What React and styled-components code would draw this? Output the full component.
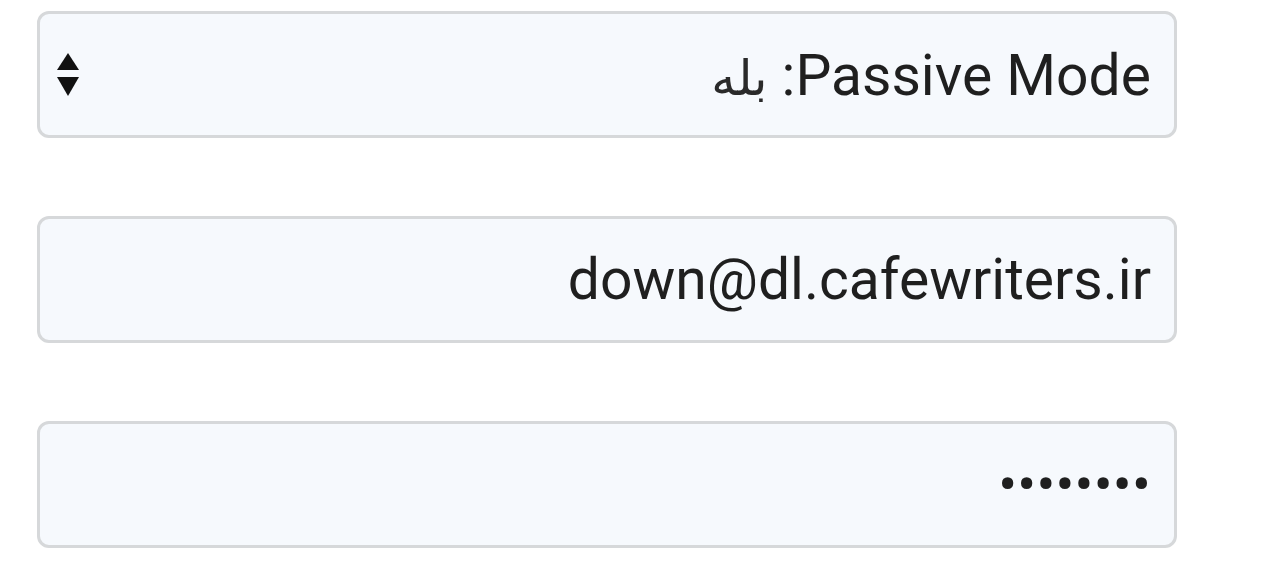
import React from "react";
import styled, { createGlobalStyle } from "styled-components";

const Global = createGlobalStyle`
  html, body { margin: 0; padding: 0; background: #ffffff; }
  body { font-family: Roboto, "DejaVu Sans", sans-serif; }
`;

const Form = styled.div`
  display: flex;
  flex-direction: column;
  gap: 78px;
  width: 1140px;
  padding: 11px 0 0 37px;
  direction: rtl;
`;

const fieldBase = `
  box-sizing: border-box;
  width: 100%;
  height: 127px;
  border: 3px solid #d6d8da;
  border-radius: 12px;
  background: #f6f9fd;
  color: #1f1f1f;
  font-family: Roboto, "DejaVu Sans", sans-serif;
  font-size: 57px;
  padding: 0 23px 0 24px;
`;

const SelectBox = styled.div`
  ${fieldBase}
  display: flex;
  align-items: center;
  justify-content: space-between;
`;

const SelectLabel = styled.span`
  line-height: 1;
  padding-top: 2px;
`;

const Persian = styled.span`
  font-family: "DejaVu Sans", sans-serif;
  font-size: 49px;
  font-weight: 400;
  color: #2a2a2a;
`;

const Spinner = styled.svg`
  width: 22px;
  height: 44px;
  margin-left: -7px;
  flex: none;
`;

const TextInput = styled.input`
  ${fieldBase}
  display: block;
  outline: none;
  text-align: right;
`;

const PasswordInput = styled(TextInput)`
  font-size: 56px;
  letter-spacing: 0.2px;
  padding-right: 23px;
`;

export default function App() {
  return (
    <>
      <Global />
      <Form>
        <SelectBox>
          <SelectLabel>
            Passive Mode: <Persian>بله</Persian>
          </SelectLabel>
          <Spinner viewBox="0 0 22 44">
            <path d="M11 0 L22 17 L0 17 Z" fill="#111" />
            <path d="M0 24 L22 24 L11 43 Z" fill="#111" />
          </Spinner>
        </SelectBox>
        <TextInput type="text" dir="rtl" readOnly value="down@dl.cafewriters.ir" />
        <PasswordInput type="password" dir="rtl" readOnly value="12345678" />
      </Form>
    </>
  );
}
